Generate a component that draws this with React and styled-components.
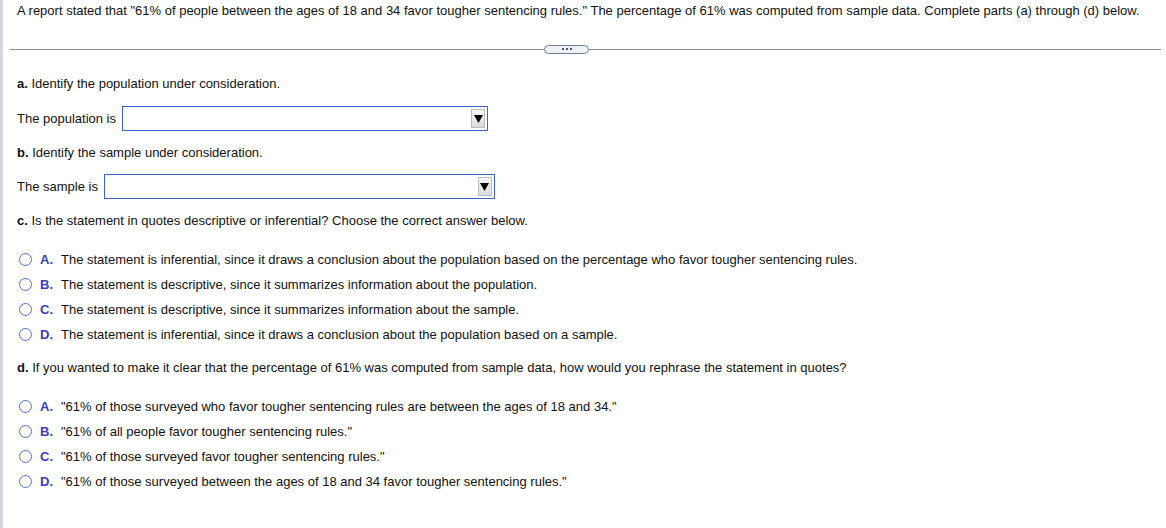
import React from 'react'
import styled, { createGlobalStyle } from 'styled-components'

const GlobalStyle = createGlobalStyle`
  html, body {
    margin: 0;
    padding: 0;
    background: #fff;
  }
  body {
    font-family: "Liberation Sans", Arial, sans-serif;
    font-size: 13px;
    color: #111;
  }
`

const partC = [
  { letter: 'A', text: 'The statement is inferential, since it draws a conclusion about the population based on the percentage who favor tougher sentencing rules.' },
  { letter: 'B', text: 'The statement is descriptive, since it summarizes information about the population.' },
  { letter: 'C', text: 'The statement is descriptive, since it summarizes information about the sample.' },
  { letter: 'D', text: 'The statement is inferential, since it draws a conclusion about the population based on a sample.' }
]

const partD = [
  { letter: 'A', text: '"61% of those surveyed who favor tougher sentencing rules are between the ages of 18 and 34."' },
  { letter: 'B', text: '"61% of all people favor tougher sentencing rules."' },
  { letter: 'C', text: '"61% of those surveyed favor tougher sentencing rules."' },
  { letter: 'D', text: '"61% of those surveyed between the ages of 18 and 34 favor tougher sentencing rules."' }
]

const Choices = ({ items }) =>
  <ChoiceList>
    {items.map((item) =>
      <Choice key={item.letter}>
        <Radio />
        <Letter>{item.letter}.</Letter>
        <span>{item.text}</span>
      </Choice>
    )}
  </ChoiceList>

const Dropdown = ({ width }) =>
  <SelectBox width={width}>
    <ArrowButton>
      <svg width="9" height="9" viewBox="0 0 9 9">
        <polygon points="0,1 9,1 4.5,9" fill="#000" />
      </svg>
    </ArrowButton>
  </SelectBox>

export default function App () {
  return (
    <Page>
      <GlobalStyle />
      <Intro>
        A report stated that "61% of people between the ages of 18 and 34 favor tougher sentencing rules." The percentage of 61% was computed from sample data. Complete parts (a) through (d) below.
      </Intro>
      <Divider>
        <Rule width={534} />
        <MorePill>
          <Dot /><Dot /><Dot />
        </MorePill>
        <Rule grow />
      </Divider>
      <Body>
        <Prompt gap={22}><b>a.</b> Identify the population under consideration.</Prompt>
        <FieldRow gap={14}>
          The population is
          <Dropdown width={366} />
        </FieldRow>
        <Prompt gap={14}><b>b.</b> Identify the sample under consideration.</Prompt>
        <FieldRow gap={13}>
          The sample is
          <Dropdown width={391} />
        </FieldRow>
        <Prompt gap={14}><b>c.</b> Is the statement in quotes descriptive or inferential? Choose the correct answer below.</Prompt>
        <Choices items={partC} />
        <Prompt gap={13}><b>d.</b> If you wanted to make it clear that the percentage of 61% was computed from sample data, how would you rephrase the statement in quotes?</Prompt>
        <Choices items={partD} />
      </Body>
    </Page>
  )
}

// STYLES
const Page = styled.div`
  min-height: 528px;
  border-left: 3px solid #d3d8e1;
  box-sizing: border-box;
`

const Intro = styled.p`
  margin: 0;
  padding: 3px 0 0 14px;
  line-height: 16px;
  color: #111;
`

const Divider = styled.div`
  display: flex;
  align-items: center;
  height: 10px;
  margin: 25px 5px 0 7px;
`

const Rule = styled.div`
  height: 1px;
  background: #8690a0;
  width: ${(p) => (p.width ? `${p.width}px` : 'auto')};
  flex: ${(p) => (p.grow ? '1' : 'none')};
`

const MorePill = styled.div`
  display: flex;
  align-items: center;
  justify-content: center;
  gap: 2px;
  width: 45px;
  height: 9px;
  box-sizing: border-box;
  border: 1px solid #6f7e95;
  border-radius: 5px;
  background: #eef1f5;
`

const Dot = styled.span`
  width: 2px;
  height: 2px;
  background: #4a5568;
`

const Body = styled.div`
  padding-left: 14px;
`

const Prompt = styled.p`
  margin: ${(p) => p.gap}px 0 0;
  line-height: 16px;
  b {
    font-weight: bold;
  }
`

const FieldRow = styled.div`
  display: flex;
  align-items: center;
  gap: 6px;
  margin-top: ${(p) => p.gap}px;
  line-height: 16px;
`

const SelectBox = styled.div`
  display: flex;
  align-items: center;
  justify-content: flex-end;
  width: ${(p) => p.width}px;
  height: 25px;
  box-sizing: border-box;
  padding-right: 2px;
  border: 1px solid #3d62c9;
  background: #fff;
`

const ArrowButton = styled.div`
  display: flex;
  align-items: center;
  justify-content: center;
  width: 14px;
  height: 19px;
  box-sizing: border-box;
  border: 1px solid #b8bcc4;
  background: linear-gradient(#f6f6f6, #dcdcdc);
`

const ChoiceList = styled.div`
  margin-top: 18px;
`

const Choice = styled.div`
  display: flex;
  align-items: center;
  height: 25px;
  padding-left: 2px;
`

const Radio = styled.span`
  width: 13px;
  height: 13px;
  box-sizing: border-box;
  border: 1.5px solid #5b6bd6;
  border-radius: 50%;
  margin-right: 8px;
`

const Letter = styled.span`
  width: 21px;
  font-weight: bold;
  color: #3b3cc4;
`
